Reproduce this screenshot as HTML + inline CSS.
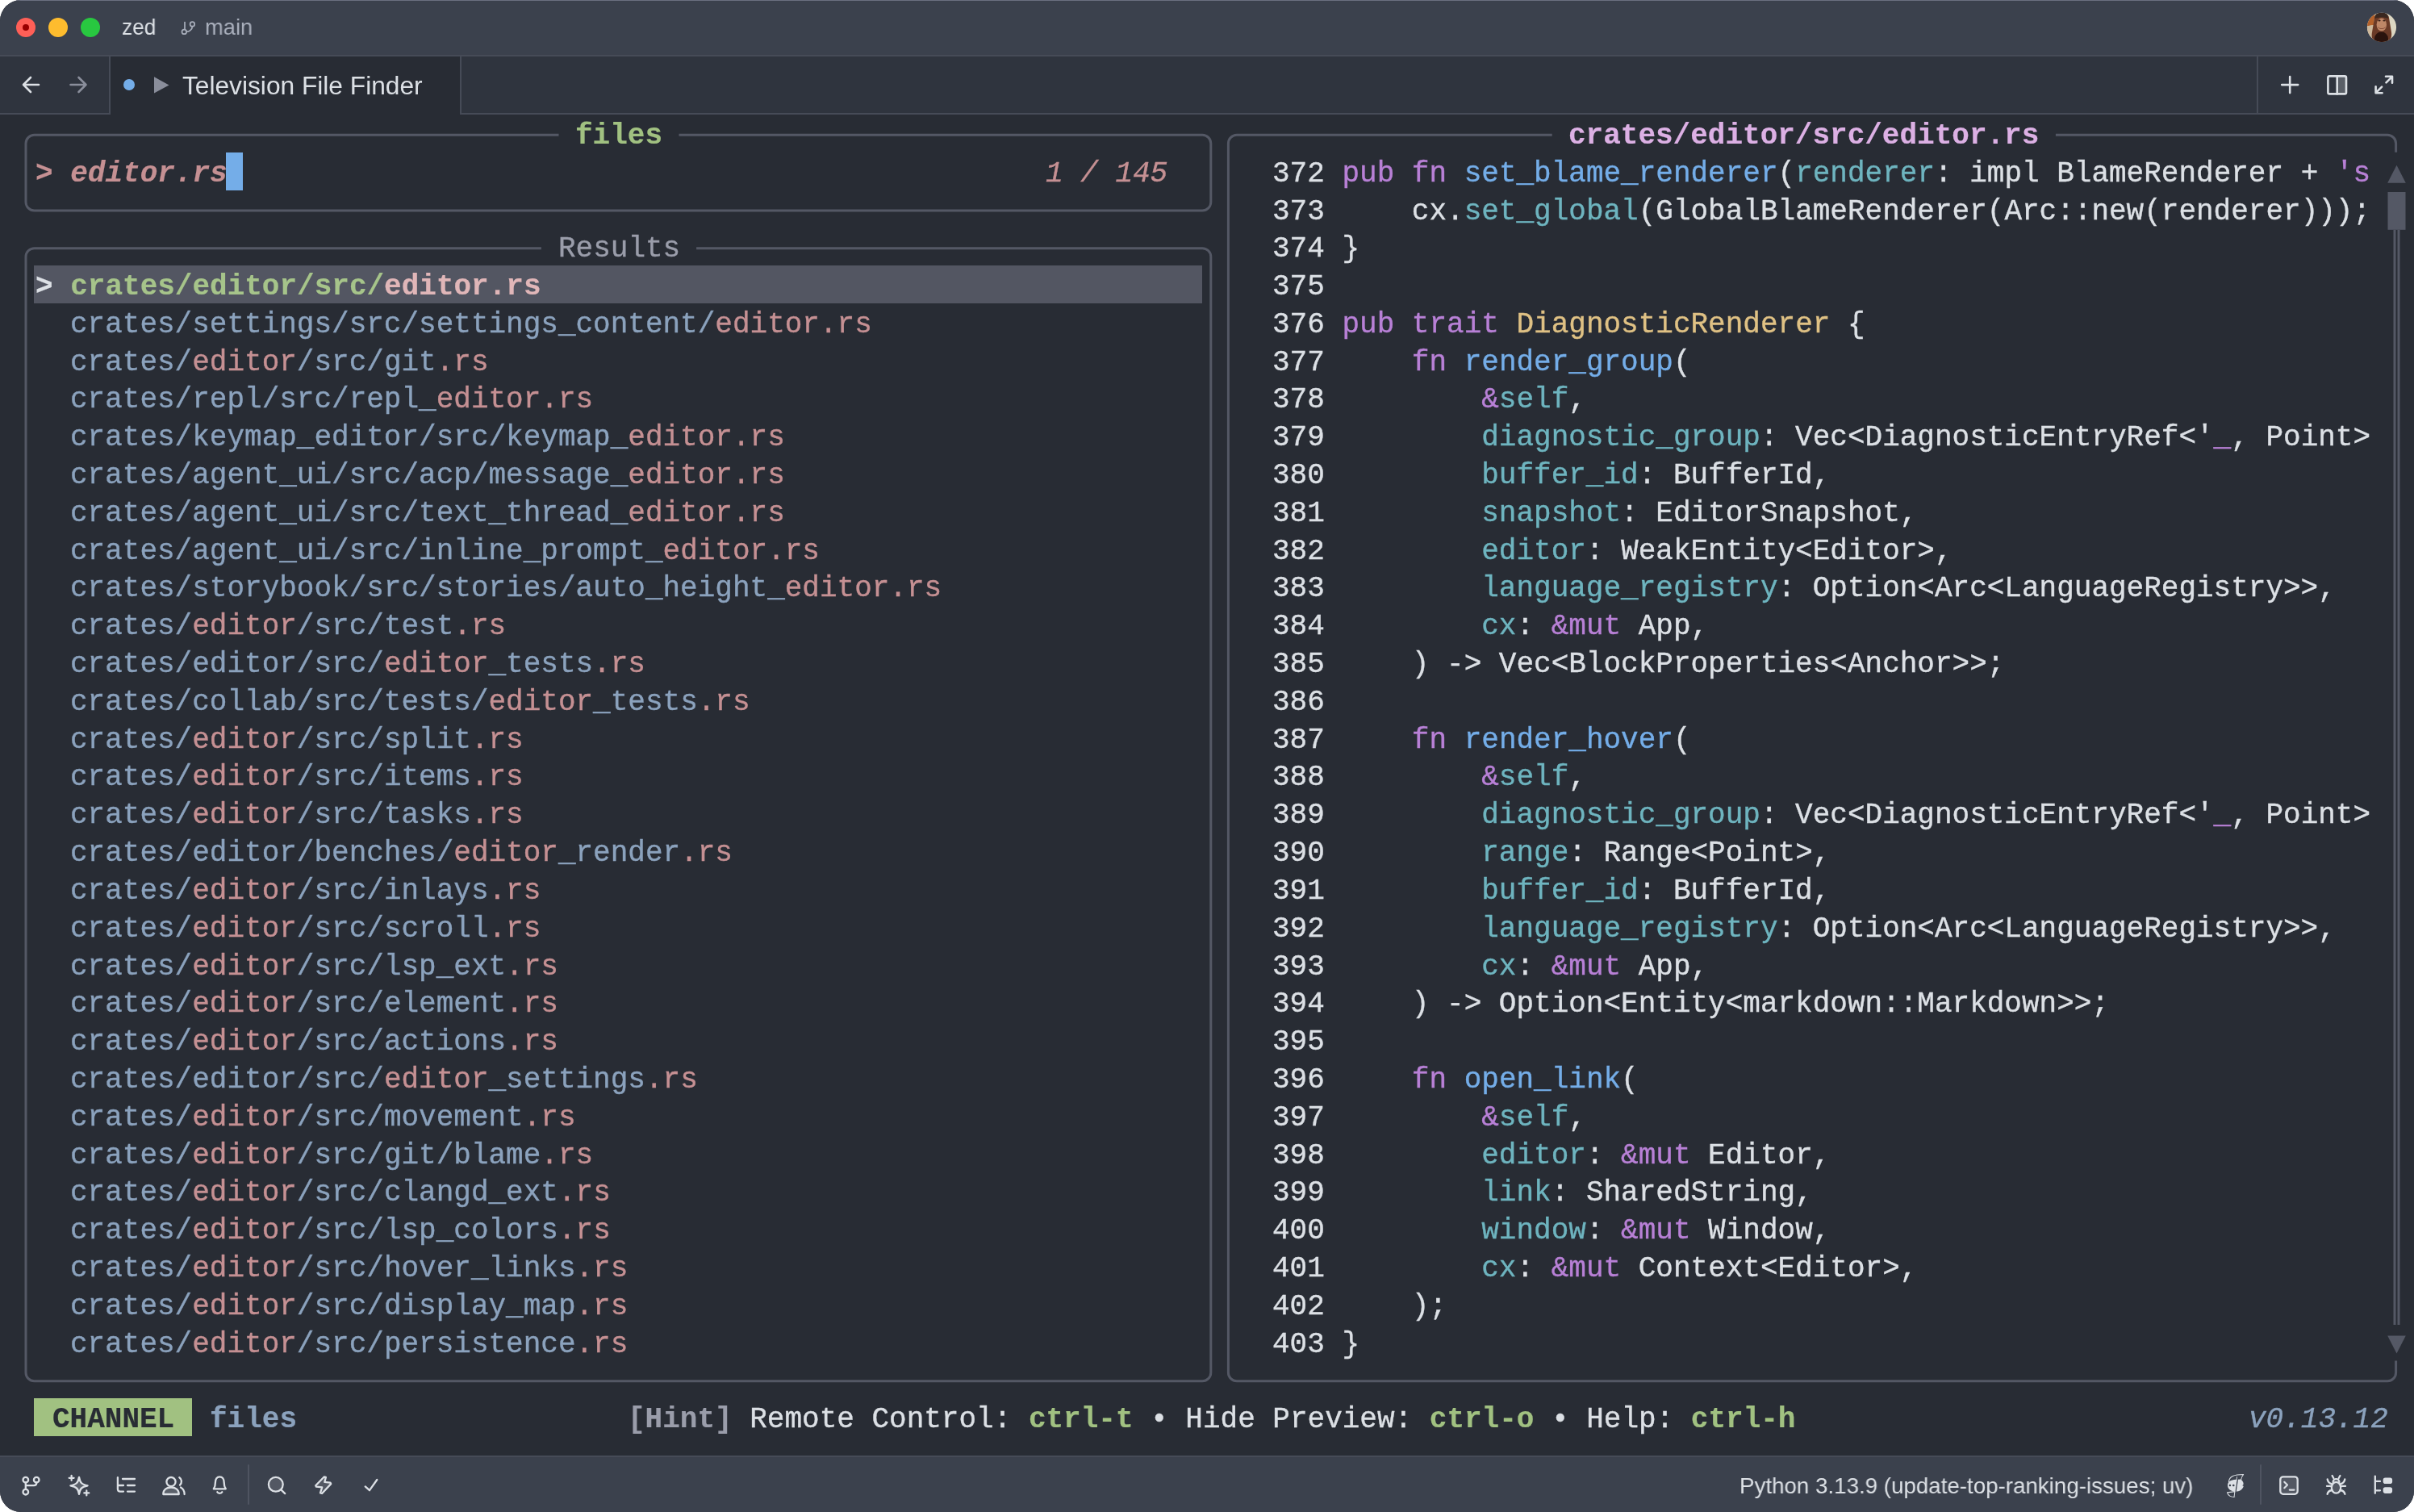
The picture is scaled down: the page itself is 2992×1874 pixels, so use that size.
<!DOCTYPE html>
<html lang="en">
<head>
<meta charset="utf-8">
<title>zed — Television File Finder</title>
<style>
html,body{margin:0;padding:0;background:#fff;}
body{width:2992px;height:1874px;overflow:hidden;position:relative;font-family:"Liberation Sans",sans-serif;}
#win{position:absolute;left:0;top:0;width:2992px;height:1874px;border-radius:26px;overflow:hidden;background:#282c34;}
#titlebar{position:absolute;left:0;top:0;width:2992px;height:68px;background:#3b414d;border-bottom:2px solid #464b57;}
#topline{position:absolute;left:0;top:0;width:2992px;height:1px;background:#6b7080;}
#tabbar{position:absolute;left:0;top:70px;width:2992px;height:70px;background:#2f343e;border-bottom:2px solid #464b57;}
#tab{position:absolute;left:137px;top:70px;width:433px;height:72px;background:#282c34;border-right:2px solid #464b57;}
.vsep{position:absolute;width:2px;background:#464b57;}
#statusbar{position:absolute;left:0;top:1804px;width:2992px;height:70px;background:#3b414d;border-top:2px solid #464b57;box-sizing:border-box;}
.ui{position:absolute;white-space:pre;line-height:1;transform-origin:0 0;will-change:transform;}
.tl{position:absolute;border-radius:50%;}
svg.abs{position:absolute;left:0;top:0;overflow:visible;}
.r{will-change:transform;position:absolute;white-space:pre;font-family:"Liberation Mono",monospace;font-size:36px;line-height:46.8px;height:46.8px;letter-spacing:0;}
.r{-webkit-text-stroke:0.35px currentColor;}
.r .b{font-weight:bold;-webkit-text-stroke:0.2px currentColor;}
.r .i{font-style:italic;}
.bx{position:absolute;}
svg.lines{position:absolute;left:0;top:0;}
</style>
</head>
<body>
<div id="win">
  <div id="titlebar"></div>
  <div id="tabbar"></div>
  <div id="tab"></div>
  <div class="vsep" style="left:135px;top:70px;height:70px"></div>
  <div class="vsep" style="left:2797px;top:70px;height:70px"></div>
  <div id="statusbar"></div>
  <div id="topline"></div>

  <!-- traffic lights -->
  <div class="tl" style="left:19.8px;top:21.800px;width:24.4px;height:24.4px;background:#ff5f57"></div>
  <div class="tl" style="left:28.1px;top:30.200px;width:7.8px;height:7.8px;background:#990000"></div>
  <div class="tl" style="left:59.8px;top:21.800px;width:24.4px;height:24.4px;background:#febc2e"></div>
  <div class="tl" style="left:99.8px;top:21.800px;width:24.4px;height:24.4px;background:#28c840"></div>

  <!-- title bar text -->
  <div class="ui" id="t_zed" style="left:151px;top:20.3px;font-size:28px;color:#dce0e5;transform:scaleX(0.94)">zed</div>
  <div class="ui" id="t_main" style="left:253.700px;top:20.3px;font-size:28px;color:#a9afbc;transform:scaleX(0.976)">main</div>

  <!-- tab title -->
  <div class="ui" id="t_tab" style="left:226px;top:90.5px;font-size:31px;color:#dce0e5;transform:scaleX(1.022)">Television File Finder</div>
  <div class="tl" style="left:152.8px;top:97.7px;width:14.4px;height:14.4px;background:#74ade8"></div>

  <!-- status bar text -->
  <div class="ui" id="t_py" style="left:2156px;top:1828px;font-size:28px;color:#dce0e5;transform:scaleX(0.99)">Python 3.13.9 (update-top-ranking-issues; uv)</div>

  <!-- chrome icons -->
  <svg class="abs" width="2992" height="1874" viewBox="0 0 2992 1874" fill="none" stroke-linecap="round" stroke-linejoin="round">
    <!-- branch icon in titlebar -->
    <g stroke="#a9afbc" stroke-width="1.700">
      <path d="M229 27.5V36"/>
      <circle cx="228.3" cy="39.4" r="2.8"/>
      <circle cx="238.4" cy="29.9" r="2.8"/>
      <path d="M238.4 32.8C238.4 37 234 39.2 231.2 39.4"/>
    </g>
    <!-- nav arrows -->
    <g stroke="#dce0e5" stroke-width="2.6">
      <path d="M48 105H29M38 96L29 105L38 114"/>
    </g>
    <g stroke="#8a8e9b" stroke-width="2.6">
      <path d="M87.500 105H106.500M97.500 96L106.500 105L97.500 114"/>
    </g>
    <!-- tab terminal-play triangle -->
    <path d="M191 95.2L209.5 105.4L191 115.6Z" fill="#8a8e9b" stroke="none"/>
    <!-- plus -->
    <g stroke="#dce0e5" stroke-width="2.6">
      <path d="M2838.2 95.100V115.100M2828.2 105.1H2848.2"/>
      <rect x="2885.4" y="94.4" width="22.6" height="22" rx="2"/>
      <path d="M2896.7 94.4V116.4"/>
      <path d="M2965 94.8L2957.5 102.3M2957 94.8H2965V102.8"/>
      <path d="M2944.6 115.2L2952.1 107.7M2952.6 115.2H2944.6V107.2"/>
    </g>
    <rect x="2896.7" y="94.4" width="11.3" height="22" fill="#dce0e5" fill-opacity="0.25" stroke="none"/>

    <!-- status bar left icons -->
    <g stroke="#dce0e5" stroke-width="2.3">
      <!-- git branch -->
      <circle cx="31.8" cy="1834.2" r="3.3"/>
      <circle cx="45.2" cy="1834.2" r="3.3"/>
      <circle cx="31.8" cy="1849.2" r="3.3"/>
      <path d="M31.8 1837.5V1845.9M45.2 1837.5V1838C45.2 1840 44 1841.2 42 1841.2H31.8"/>
      <!-- sparkles -->
      <path d="M98 1830.8C99.2 1837.6 101 1839.6 108.6 1841.3C101 1843 99.2 1845 98 1851.8C96.8 1845 95 1843 87.4 1841.3C95 1839.6 96.8 1837.6 98 1830.800Z" fill="#dce0e5" fill-opacity="0.2"/>
      <path d="M88.6 1828.8V1834.8M85.6 1831.800H91.6M107.300 1847.400V1853.400M104.3 1850.400H110.3" stroke-width="2.2"/>
      <!-- list tree -->
      <path d="M145.900 1831.2V1845.5C145.900 1847.5 147 1848.6 149 1848.6H153M145.900 1841H153M152 1833H167M158 1841H167M158 1848.6H167"/>
      <!-- users -->
      <circle cx="212" cy="1836.600" r="5.600"/>
      <path d="M202.300 1852C202.300 1846.5 206.500 1843.500 212 1843.500C217.500 1843.500 221.700 1846.500 221.700 1852Z" fill="#dce0e5" fill-opacity="0.2"/>
      <path d="M222.300 1831.200C225.300 1833 226 1837.500 223 1840.600M224 1843.500C227.300 1845.300 228.600 1848.300 228.600 1852"/>
      <!-- bell -->
      <path d="M264.800 1845.300H279.800C278 1843 277.700 1841 277.700 1837.500C277.700 1833 275.500 1830.300 272.300 1830.300C269.100 1830.300 266.900 1833 266.900 1837.500C266.900 1841 266.600 1843 264.800 1845.300Z"/>
      <path d="M269.300 1849.300C270.300 1851.300 274.300 1851.300 275.300 1849.300"/>
      <!-- search -->
      <circle cx="341.800" cy="1839.800" r="8.900" fill="#dce0e5" fill-opacity="0.15"/>
      <path d="M348.600 1846.700L353.200 1851.100"/>
      <!-- bolt -->
      <path d="M401.700 1830.500L403.900 1830.900L402.300 1836.900L409.400 1837.600L410.200 1839.100L399.100 1851L397 1850.400L399.200 1843.400L392 1842.700L391.200 1841.300Z" fill="#dce0e5" fill-opacity="0.15"/>
      <!-- check -->
      <path d="M452.700 1842.400L458 1847.200L467.300 1834"/>
    </g>
    <path d="M308 1816V1864M2802 1816V1864" stroke="#4f5461" stroke-width="2"/>

    <!-- status bar right icons -->
    <g stroke="#dce0e5" stroke-width="2.3">
      <!-- terminal -->
      <rect x="2826.300" y="1830.400" width="21.400" height="21.400" rx="3.500" fill="#dce0e5" fill-opacity="0.15"/>
      <path d="M2831.300 1836.800L2835 1840.500L2831.300 1844.200M2837.800 1846.600H2843.500" stroke-width="2.2"/>
      <!-- bug -->
      <ellipse cx="2895.500" cy="1843.800" rx="5.700" ry="6.900" fill="#dce0e5" fill-opacity="0.15"/>
      <path d="M2891.600 1837.300C2891.600 1831.800 2899.400 1831.800 2899.400 1837.300"/>
      <path d="M2892.300 1832L2890.600 1829M2898.700 1832L2900.400 1829"/>
      <path d="M2889.600 1841.900H2884M2901.400 1841.900H2907"/>
      <path d="M2890.200 1839.300C2887 1838.500 2885.200 1836.500 2884.700 1833.500M2900.800 1839.300C2904 1838.500 2905.800 1836.500 2906.300 1833.500"/>
      <path d="M2890.400 1847C2887.200 1847.400 2885.200 1849 2884.600 1851.800M2900.600 1847C2903.800 1847.400 2905.800 1849 2906.400 1851.800"/>
      <!-- debugger tree -->
      <path d="M2943.800 1829.600V1850.800M2943.800 1835.900H2950M2943.800 1847.300H2950"/>
    </g>
    <rect x="2953.700" y="1831.400" width="11.400" height="7.600" rx="2.800" fill="#dce0e5"/>
    <rect x="2953.700" y="1843.300" width="11.400" height="7.600" rx="2.800" fill="#dce0e5"/>
    <!-- prediction icon (face) -->
    <g>
      <g stroke="#dce0e5" stroke-width="1.100" fill="none">
        <path d="M2762.400 1836.800C2763 1829.800 2769 1827.500 2780.600 1827.500C2779 1829.500 2778 1831.500 2777.800 1833.500"/>
        <path d="M2760.500 1849.900C2761.600 1853.500 2765 1855.500 2769.700 1855.500L2770.300 1848.600Z"/>
      </g>
      <path d="M2761 1841C2761 1836.500 2765 1834 2771 1833.700L2777.500 1833.500C2780 1835.500 2781.300 1838.500 2780.300 1840.500L2779 1840.900L2780.800 1842C2779.500 1846.500 2775 1849 2770.500 1848.700C2765 1848.500 2761 1845.500 2761 1841Z" fill="#dce0e5" stroke="none"/>
      <path d="M2773.700 1830.500L2770.100 1855" stroke="#3b414d" stroke-width="1.500"/>
      <path d="M2772.600 1830.500L2769 1855" stroke="#dce0e5" stroke-width="0.900"/>
      <circle cx="2763.900" cy="1841" r="1.300" fill="#3b414d" stroke="none"/>
      <circle cx="2768.300" cy="1841" r="1.300" fill="#3b414d" stroke="none"/>
    </g>
    <!-- avatar -->
    <defs><clipPath id="av"><circle cx="2952" cy="33.800" r="18.100"/></clipPath></defs>
    <g clip-path="url(#av)" stroke="none">
      <rect x="2930" y="12" width="44" height="44" fill="#dcd7c2"/>
      <path d="M2930 14H2944L2942 31L2930 33Z" fill="#b4612b"/>
      <path d="M2930 33L2942 31L2941 50L2930 50Z" fill="#cdb89c"/>
      <path d="M2943 22C2943 15 2961 15 2961 22L2964 40C2965 47 2962 52 2958 54H2944C2940 51 2939 45 2940 40Z" fill="#6a3a27"/>
      <path d="M2943.500 23C2943 16.500 2948 15.500 2952 15.500C2956 15.500 2960.500 16.500 2960 23C2956 21 2948 21 2943.500 23Z" fill="#3a2820"/>
      <ellipse cx="2951.800" cy="30.500" rx="6.200" ry="8" fill="#bf8767"/>
      <path d="M2947 33C2950 36 2954 36 2957 33C2956 37 2948 37 2947 33Z" fill="#7a4030"/>
      <ellipse cx="2951.500" cy="48" rx="8.500" ry="8.500" fill="#2a130d"/>
      <ellipse cx="2949" cy="25.500" rx="1.600" ry="1" fill="#3a2018"/>
      <ellipse cx="2955" cy="25.500" rx="1.600" ry="1" fill="#3a2018"/>
    </g>
  </svg>

  <!-- terminal -->
<div class="bx" style="left:42.00px;top:329.20px;width:1448.28px;height:46.80px;background:#535662"></div>
<div class="bx" style="left:279.60px;top:188.80px;width:21.60px;height:46.80px;background:#74ade8"></div>
<div class="bx" style="left:42.00px;top:1733.20px;width:195.91px;height:46.80px;background:#a1c181"></div>
<svg class="lines" width="2992" height="1874" viewBox="0 0 2992 1874"><g fill="none" stroke="#545865" stroke-width="3"><path d="M32.00 177.80 A10.5 10.5 0 0 1 42.50 167.30 L692.50 167.30 M841.50 167.30 L1490.30 167.30 A10.5 10.5 0 0 1 1500.80 177.80 L1500.80 250.40 A10.5 10.5 0 0 1 1490.30 260.90 L42.50 260.90 A10.5 10.5 0 0 1 32.00 250.40 L32.00 177.80"/><path d="M32.00 318.20 A10.5 10.5 0 0 1 42.50 307.70 L670.90 307.70 M863.10 307.70 L1490.30 307.70 A10.5 10.5 0 0 1 1500.80 318.20 L1500.80 1701.20 A10.5 10.5 0 0 1 1490.30 1711.70 L42.50 1711.70 A10.5 10.5 0 0 1 32.00 1701.20 L32.00 318.20"/><path d="M1522.40 177.80 A10.5 10.5 0 0 1 1532.90 167.30 L1923.70 167.30 M2547.90 167.30 L2959.10 167.30 A10.5 10.5 0 0 1 2969.60 177.80 L2969.60 188.80 M2969.60 1686.40 L2969.60 1701.20 A10.5 10.5 0 0 1 2959.10 1711.70 L1532.90 1711.70 A10.5 10.5 0 0 1 1522.40 1701.20 L1522.40 177.80"/></g><g fill="#545865"><polygon points="2959.20,226.70 2981.80,226.70 2970.50,204.70"/><polygon points="2959.20,1655.50 2981.80,1655.50 2970.50,1677.50"/><rect x="2959.50" y="238.00" width="22" height="46.80"/><rect x="2966.50" y="284.80" width="3" height="1357.20"/><rect x="2971.50" y="284.80" width="3" height="1357.20"/></g></svg>
<div class="r" style="left:713.00px;top:146.00px"><span class="b" style="color:#a1c181">files</span></div>
<div class="r" style="left:692.00px;top:286.00px"><span style="color:#9a9daa">Results</span></div>
<div class="r" style="left:1944.00px;top:146.00px"><span class="b" style="color:#dcb0e4">crates/editor/src/editor.rs</span></div>
<div class="r" style="left:44.00px;top:193.00px"><span class="b" style="color:#c59093">&gt;</span><span style="color:#c59093"> </span><span class="b i" style="color:#c59093">editor.rs</span></div>
<div class="r" style="left:1296.00px;top:193.00px"><span class="i" style="color:#c59093">1 / 145</span></div>
<div class="r" style="left:44.00px;top:333.00px"><span class="b" style="color:#dce0e5">&gt;</span><span style="color:#dce0e5"> </span><span class="b" style="color:#a6c48a">crates/editor/src/</span><span class="b" style="color:#e0b6b8">editor.rs</span></div>
<div class="r" style="left:87.00px;top:380.00px"><span style="color:#8ba2bd">crates/settings/src/settings_content/</span><span style="color:#c59093">editor.rs</span></div>
<div class="r" style="left:87.00px;top:427.00px"><span style="color:#8ba2bd">crates/</span><span style="color:#c59093">editor</span><span style="color:#8ba2bd">/src/git</span><span style="color:#c59093">.rs</span></div>
<div class="r" style="left:87.00px;top:473.00px"><span style="color:#8ba2bd">crates/repl/src/repl_</span><span style="color:#c59093">editor.rs</span></div>
<div class="r" style="left:87.00px;top:520.00px"><span style="color:#8ba2bd">crates/keymap_editor/src/keymap_</span><span style="color:#c59093">editor.rs</span></div>
<div class="r" style="left:87.00px;top:567.00px"><span style="color:#8ba2bd">crates/agent_ui/src/acp/message_</span><span style="color:#c59093">editor.rs</span></div>
<div class="r" style="left:87.00px;top:614.00px"><span style="color:#8ba2bd">crates/agent_ui/src/text_thread_</span><span style="color:#c59093">editor.rs</span></div>
<div class="r" style="left:87.00px;top:661.00px"><span style="color:#8ba2bd">crates/agent_ui/src/inline_prompt_</span><span style="color:#c59093">editor.rs</span></div>
<div class="r" style="left:87.00px;top:707.00px"><span style="color:#8ba2bd">crates/storybook/src/stories/auto_height_</span><span style="color:#c59093">editor.rs</span></div>
<div class="r" style="left:87.00px;top:754.00px"><span style="color:#8ba2bd">crates/</span><span style="color:#c59093">editor</span><span style="color:#8ba2bd">/src/test</span><span style="color:#c59093">.rs</span></div>
<div class="r" style="left:87.00px;top:801.00px"><span style="color:#8ba2bd">crates/editor/src/</span><span style="color:#c59093">editor</span><span style="color:#8ba2bd">_tests</span><span style="color:#c59093">.rs</span></div>
<div class="r" style="left:87.00px;top:848.00px"><span style="color:#8ba2bd">crates/collab/src/tests/</span><span style="color:#c59093">editor</span><span style="color:#8ba2bd">_tests</span><span style="color:#c59093">.rs</span></div>
<div class="r" style="left:87.00px;top:895.00px"><span style="color:#8ba2bd">crates/</span><span style="color:#c59093">editor</span><span style="color:#8ba2bd">/src/split</span><span style="color:#c59093">.rs</span></div>
<div class="r" style="left:87.00px;top:941.00px"><span style="color:#8ba2bd">crates/</span><span style="color:#c59093">editor</span><span style="color:#8ba2bd">/src/items</span><span style="color:#c59093">.rs</span></div>
<div class="r" style="left:87.00px;top:988.00px"><span style="color:#8ba2bd">crates/</span><span style="color:#c59093">editor</span><span style="color:#8ba2bd">/src/tasks</span><span style="color:#c59093">.rs</span></div>
<div class="r" style="left:87.00px;top:1035.00px"><span style="color:#8ba2bd">crates/editor/benches/</span><span style="color:#c59093">editor</span><span style="color:#8ba2bd">_render</span><span style="color:#c59093">.rs</span></div>
<div class="r" style="left:87.00px;top:1082.00px"><span style="color:#8ba2bd">crates/</span><span style="color:#c59093">editor</span><span style="color:#8ba2bd">/src/inlays</span><span style="color:#c59093">.rs</span></div>
<div class="r" style="left:87.00px;top:1129.00px"><span style="color:#8ba2bd">crates/</span><span style="color:#c59093">editor</span><span style="color:#8ba2bd">/src/scroll</span><span style="color:#c59093">.rs</span></div>
<div class="r" style="left:87.00px;top:1176.00px"><span style="color:#8ba2bd">crates/</span><span style="color:#c59093">editor</span><span style="color:#8ba2bd">/src/lsp_ext</span><span style="color:#c59093">.rs</span></div>
<div class="r" style="left:87.00px;top:1222.00px"><span style="color:#8ba2bd">crates/</span><span style="color:#c59093">editor</span><span style="color:#8ba2bd">/src/element</span><span style="color:#c59093">.rs</span></div>
<div class="r" style="left:87.00px;top:1269.00px"><span style="color:#8ba2bd">crates/</span><span style="color:#c59093">editor</span><span style="color:#8ba2bd">/src/actions</span><span style="color:#c59093">.rs</span></div>
<div class="r" style="left:87.00px;top:1316.00px"><span style="color:#8ba2bd">crates/editor/src/</span><span style="color:#c59093">editor</span><span style="color:#8ba2bd">_settings</span><span style="color:#c59093">.rs</span></div>
<div class="r" style="left:87.00px;top:1363.00px"><span style="color:#8ba2bd">crates/</span><span style="color:#c59093">editor</span><span style="color:#8ba2bd">/src/movement</span><span style="color:#c59093">.rs</span></div>
<div class="r" style="left:87.00px;top:1410.00px"><span style="color:#8ba2bd">crates/</span><span style="color:#c59093">editor</span><span style="color:#8ba2bd">/src/git/blame</span><span style="color:#c59093">.rs</span></div>
<div class="r" style="left:87.00px;top:1456.00px"><span style="color:#8ba2bd">crates/</span><span style="color:#c59093">editor</span><span style="color:#8ba2bd">/src/clangd_ext</span><span style="color:#c59093">.rs</span></div>
<div class="r" style="left:87.00px;top:1503.00px"><span style="color:#8ba2bd">crates/</span><span style="color:#c59093">editor</span><span style="color:#8ba2bd">/src/lsp_colors</span><span style="color:#c59093">.rs</span></div>
<div class="r" style="left:87.00px;top:1550.00px"><span style="color:#8ba2bd">crates/</span><span style="color:#c59093">editor</span><span style="color:#8ba2bd">/src/hover_links</span><span style="color:#c59093">.rs</span></div>
<div class="r" style="left:87.00px;top:1597.00px"><span style="color:#8ba2bd">crates/</span><span style="color:#c59093">editor</span><span style="color:#8ba2bd">/src/display_map</span><span style="color:#c59093">.rs</span></div>
<div class="r" style="left:87.00px;top:1644.00px"><span style="color:#8ba2bd">crates/</span><span style="color:#c59093">editor</span><span style="color:#8ba2bd">/src/persistence</span><span style="color:#c59093">.rs</span></div>
<div class="r" style="left:1577.00px;top:193.00px"><span style="color:#dce0e5">372</span><span style="color:#dce0e5"> </span><span style="color:#b880d6">pub</span><span style="color:#dce0e5"> </span><span style="color:#b880d6">fn</span><span style="color:#dce0e5"> </span><span style="color:#74ade8">set_blame_renderer</span><span style="color:#dce0e5">(</span><span style="color:#6eb4bf">renderer</span><span style="color:#dce0e5">: impl BlameRenderer + </span><span style="color:#b880d6">'s</span></div>
<div class="r" style="left:1577.00px;top:240.00px"><span style="color:#dce0e5">373</span><span style="color:#dce0e5"> </span><span style="color:#dce0e5">    cx.</span><span style="color:#6eb4bf">set_global</span><span style="color:#dce0e5">(GlobalBlameRenderer(Arc::new(renderer)));</span></div>
<div class="r" style="left:1577.00px;top:286.00px"><span style="color:#dce0e5">374</span><span style="color:#dce0e5"> </span><span style="color:#dce0e5">}</span></div>
<div class="r" style="left:1577.00px;top:333.00px"><span style="color:#dce0e5">375</span><span style="color:#dce0e5"> </span></div>
<div class="r" style="left:1577.00px;top:380.00px"><span style="color:#dce0e5">376</span><span style="color:#dce0e5"> </span><span style="color:#b880d6">pub</span><span style="color:#dce0e5"> </span><span style="color:#b880d6">trait</span><span style="color:#dce0e5"> </span><span style="color:#dfc184">DiagnosticRenderer</span><span style="color:#dce0e5"> {</span></div>
<div class="r" style="left:1577.00px;top:427.00px"><span style="color:#dce0e5">377</span><span style="color:#dce0e5"> </span><span style="color:#dce0e5">    </span><span style="color:#b880d6">fn</span><span style="color:#dce0e5"> </span><span style="color:#74ade8">render_group</span><span style="color:#dce0e5">(</span></div>
<div class="r" style="left:1577.00px;top:473.00px"><span style="color:#dce0e5">378</span><span style="color:#dce0e5"> </span><span style="color:#dce0e5">        </span><span style="color:#b880d6">&amp;</span><span style="color:#6eb4bf">self</span><span style="color:#dce0e5">,</span></div>
<div class="r" style="left:1577.00px;top:520.00px"><span style="color:#dce0e5">379</span><span style="color:#dce0e5"> </span><span style="color:#dce0e5">        </span><span style="color:#6eb4bf">diagnostic_group</span><span style="color:#dce0e5">: Vec&lt;DiagnosticEntryRef&lt;'</span><span style="color:#b880d6">_</span><span style="color:#dce0e5">, Point&gt;</span></div>
<div class="r" style="left:1577.00px;top:567.00px"><span style="color:#dce0e5">380</span><span style="color:#dce0e5"> </span><span style="color:#dce0e5">        </span><span style="color:#6eb4bf">buffer_id</span><span style="color:#dce0e5">: BufferId,</span></div>
<div class="r" style="left:1577.00px;top:614.00px"><span style="color:#dce0e5">381</span><span style="color:#dce0e5"> </span><span style="color:#dce0e5">        </span><span style="color:#6eb4bf">snapshot</span><span style="color:#dce0e5">: EditorSnapshot,</span></div>
<div class="r" style="left:1577.00px;top:661.00px"><span style="color:#dce0e5">382</span><span style="color:#dce0e5"> </span><span style="color:#dce0e5">        </span><span style="color:#6eb4bf">editor</span><span style="color:#dce0e5">: WeakEntity&lt;Editor&gt;,</span></div>
<div class="r" style="left:1577.00px;top:707.00px"><span style="color:#dce0e5">383</span><span style="color:#dce0e5"> </span><span style="color:#dce0e5">        </span><span style="color:#6eb4bf">language_registry</span><span style="color:#dce0e5">: Option&lt;Arc&lt;LanguageRegistry&gt;&gt;,</span></div>
<div class="r" style="left:1577.00px;top:754.00px"><span style="color:#dce0e5">384</span><span style="color:#dce0e5"> </span><span style="color:#dce0e5">        </span><span style="color:#6eb4bf">cx</span><span style="color:#dce0e5">: </span><span style="color:#b880d6">&amp;mut</span><span style="color:#dce0e5"> App,</span></div>
<div class="r" style="left:1577.00px;top:801.00px"><span style="color:#dce0e5">385</span><span style="color:#dce0e5"> </span><span style="color:#dce0e5">    ) -&gt; Vec&lt;BlockProperties&lt;Anchor&gt;&gt;;</span></div>
<div class="r" style="left:1577.00px;top:848.00px"><span style="color:#dce0e5">386</span><span style="color:#dce0e5"> </span></div>
<div class="r" style="left:1577.00px;top:895.00px"><span style="color:#dce0e5">387</span><span style="color:#dce0e5"> </span><span style="color:#dce0e5">    </span><span style="color:#b880d6">fn</span><span style="color:#dce0e5"> </span><span style="color:#74ade8">render_hover</span><span style="color:#dce0e5">(</span></div>
<div class="r" style="left:1577.00px;top:941.00px"><span style="color:#dce0e5">388</span><span style="color:#dce0e5"> </span><span style="color:#dce0e5">        </span><span style="color:#b880d6">&amp;</span><span style="color:#6eb4bf">self</span><span style="color:#dce0e5">,</span></div>
<div class="r" style="left:1577.00px;top:988.00px"><span style="color:#dce0e5">389</span><span style="color:#dce0e5"> </span><span style="color:#dce0e5">        </span><span style="color:#6eb4bf">diagnostic_group</span><span style="color:#dce0e5">: Vec&lt;DiagnosticEntryRef&lt;'</span><span style="color:#b880d6">_</span><span style="color:#dce0e5">, Point&gt;</span></div>
<div class="r" style="left:1577.00px;top:1035.00px"><span style="color:#dce0e5">390</span><span style="color:#dce0e5"> </span><span style="color:#dce0e5">        </span><span style="color:#6eb4bf">range</span><span style="color:#dce0e5">: Range&lt;Point&gt;,</span></div>
<div class="r" style="left:1577.00px;top:1082.00px"><span style="color:#dce0e5">391</span><span style="color:#dce0e5"> </span><span style="color:#dce0e5">        </span><span style="color:#6eb4bf">buffer_id</span><span style="color:#dce0e5">: BufferId,</span></div>
<div class="r" style="left:1577.00px;top:1129.00px"><span style="color:#dce0e5">392</span><span style="color:#dce0e5"> </span><span style="color:#dce0e5">        </span><span style="color:#6eb4bf">language_registry</span><span style="color:#dce0e5">: Option&lt;Arc&lt;LanguageRegistry&gt;&gt;,</span></div>
<div class="r" style="left:1577.00px;top:1176.00px"><span style="color:#dce0e5">393</span><span style="color:#dce0e5"> </span><span style="color:#dce0e5">        </span><span style="color:#6eb4bf">cx</span><span style="color:#dce0e5">: </span><span style="color:#b880d6">&amp;mut</span><span style="color:#dce0e5"> App,</span></div>
<div class="r" style="left:1577.00px;top:1222.00px"><span style="color:#dce0e5">394</span><span style="color:#dce0e5"> </span><span style="color:#dce0e5">    ) -&gt; Option&lt;Entity&lt;markdown::Markdown&gt;&gt;;</span></div>
<div class="r" style="left:1577.00px;top:1269.00px"><span style="color:#dce0e5">395</span><span style="color:#dce0e5"> </span></div>
<div class="r" style="left:1577.00px;top:1316.00px"><span style="color:#dce0e5">396</span><span style="color:#dce0e5"> </span><span style="color:#dce0e5">    </span><span style="color:#b880d6">fn</span><span style="color:#dce0e5"> </span><span style="color:#74ade8">open_link</span><span style="color:#dce0e5">(</span></div>
<div class="r" style="left:1577.00px;top:1363.00px"><span style="color:#dce0e5">397</span><span style="color:#dce0e5"> </span><span style="color:#dce0e5">        </span><span style="color:#b880d6">&amp;</span><span style="color:#6eb4bf">self</span><span style="color:#dce0e5">,</span></div>
<div class="r" style="left:1577.00px;top:1410.00px"><span style="color:#dce0e5">398</span><span style="color:#dce0e5"> </span><span style="color:#dce0e5">        </span><span style="color:#6eb4bf">editor</span><span style="color:#dce0e5">: </span><span style="color:#b880d6">&amp;mut</span><span style="color:#dce0e5"> Editor,</span></div>
<div class="r" style="left:1577.00px;top:1456.00px"><span style="color:#dce0e5">399</span><span style="color:#dce0e5"> </span><span style="color:#dce0e5">        </span><span style="color:#6eb4bf">link</span><span style="color:#dce0e5">: SharedString,</span></div>
<div class="r" style="left:1577.00px;top:1503.00px"><span style="color:#dce0e5">400</span><span style="color:#dce0e5"> </span><span style="color:#dce0e5">        </span><span style="color:#6eb4bf">window</span><span style="color:#dce0e5">: </span><span style="color:#b880d6">&amp;mut</span><span style="color:#dce0e5"> Window,</span></div>
<div class="r" style="left:1577.00px;top:1550.00px"><span style="color:#dce0e5">401</span><span style="color:#dce0e5"> </span><span style="color:#dce0e5">        </span><span style="color:#6eb4bf">cx</span><span style="color:#dce0e5">: </span><span style="color:#b880d6">&amp;mut</span><span style="color:#dce0e5"> Context&lt;Editor&gt;,</span></div>
<div class="r" style="left:1577.00px;top:1597.00px"><span style="color:#dce0e5">402</span><span style="color:#dce0e5"> </span><span style="color:#dce0e5">    );</span></div>
<div class="r" style="left:1577.00px;top:1644.00px"><span style="color:#dce0e5">403</span><span style="color:#dce0e5"> </span><span style="color:#dce0e5">}</span></div>
<div class="r" style="left:65.00px;top:1737.00px"><span class="b" style="color:#282c34">CHANNEL</span></div>
<div class="r" style="left:260.00px;top:1737.00px"><span class="b" style="color:#8ba2bd">files</span></div>
<div class="r" style="left:778.00px;top:1737.00px"><span class="b" style="color:#9a9daa">[Hint]</span><span style="color:#dce0e5"> Remote Control: </span><span class="b" style="color:#a1c181">ctrl-t</span><span style="color:#dce0e5"> • Hide Preview: </span><span class="b" style="color:#a1c181">ctrl-o</span><span style="color:#dce0e5"> • Help: </span><span class="b" style="color:#a1c181">ctrl-h</span></div>
<div class="r" style="left:2787.00px;top:1737.00px"><span class="i" style="color:#8ba2bd">v0.13.12</span></div>
</div>
</body>
</html>
